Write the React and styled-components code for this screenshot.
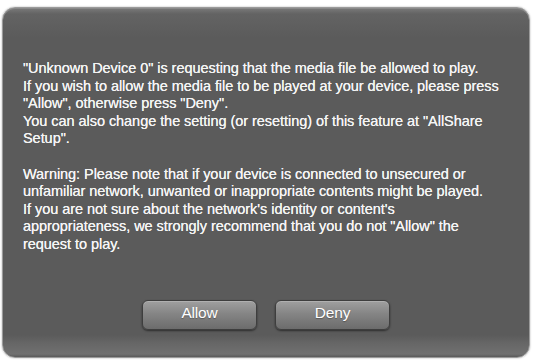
import styled, { createGlobalStyle } from "styled-components";

const GlobalStyle = createGlobalStyle`
    html, body {
        margin: 0;
        padding: 0;
        background: #ffffff;
    }
`;

const Page = styled.div`
    width: 535px;
    height: 362px;
    padding: 7px 5px 4px 2px;
    box-sizing: border-box;
`;

const Dialog = styled.div`
    height: 100%;
    box-sizing: border-box;
    border-radius: 13px;
    border: 1px solid #9a9a9a;
    background: linear-gradient(
        to bottom,
        #7a7a7a 0px,
        #636363 6px,
        #5b5b5b 30px,
        #5b5b5b calc(100% - 22px),
        #666666 calc(100% - 14px),
        #707070 calc(100% - 3px),
        #5a5a5a 100%
    );
    box-shadow: 0 0 2px rgba(0, 0, 0, 0.35), inset 0 1px 0 #8a8a8a;
    display: flex;
    flex-direction: column;
    padding: 52px 20px 0 20px;
    font-family: "Liberation Sans", Arial, sans-serif;
    color: #f4f4f4;
`;

const Message = styled.div`
    font-size: 14.5px;
    line-height: 17.6px;
    letter-spacing: -0.05px;
    text-shadow: 0 0 0.4px #ffffff;
`;

const Paragraph = styled.p`
    margin: 0 0 17.6px 0;
`;

const Buttons = styled.div`
    display: flex;
    justify-content: center;
    gap: 18px;
    margin-top: auto;
    margin-bottom: 27px;
`;

const Button = styled.button`
    width: 115px;
    height: 30px;
    border-radius: 6px;
    border: 1px solid #3e3e3e;
    background: linear-gradient(to bottom, #a0a0a0 0%, #858585 45%, #6c6c6c 100%);
    box-shadow: 0 1px 2px rgba(0, 0, 0, 0.5), inset 0 1px 0 #b0b0b0;
    color: #ffffff;
    font-family: "Liberation Sans", Arial, sans-serif;
    font-size: 15.5px;
    letter-spacing: -0.2px;
    text-shadow: 0 1px 1px rgba(0, 0, 0, 0.3);
    padding: 0 0 4px 0;
    cursor: pointer;
`;

export default function App() {
    return (
        <Page>
            <GlobalStyle />
            <Dialog>
                <Message>
                    <Paragraph>
                        "Unknown Device 0" is requesting that the media file be allowed to play.
                        <br />
                        If you wish to allow the media file to be played at your device, please press
                        <br />
                        "Allow", otherwise press "Deny".
                        <br />
                        You can also change the setting (or resetting) of this feature at "AllShare
                        <br />
                        Setup".
                    </Paragraph>
                    <Paragraph>
                        Warning: Please note that if your device is connected to unsecured or
                        <br />
                        unfamiliar network, unwanted or inappropriate contents might be played.
                        <br />
                        If you are not sure about the network's identity or content's
                        <br />
                        appropriateness, we strongly recommend that you do not "Allow" the
                        <br />
                        request to play.
                    </Paragraph>
                </Message>
                <Buttons>
                    <Button>Allow</Button>
                    <Button>Deny</Button>
                </Buttons>
            </Dialog>
        </Page>
    );
}
